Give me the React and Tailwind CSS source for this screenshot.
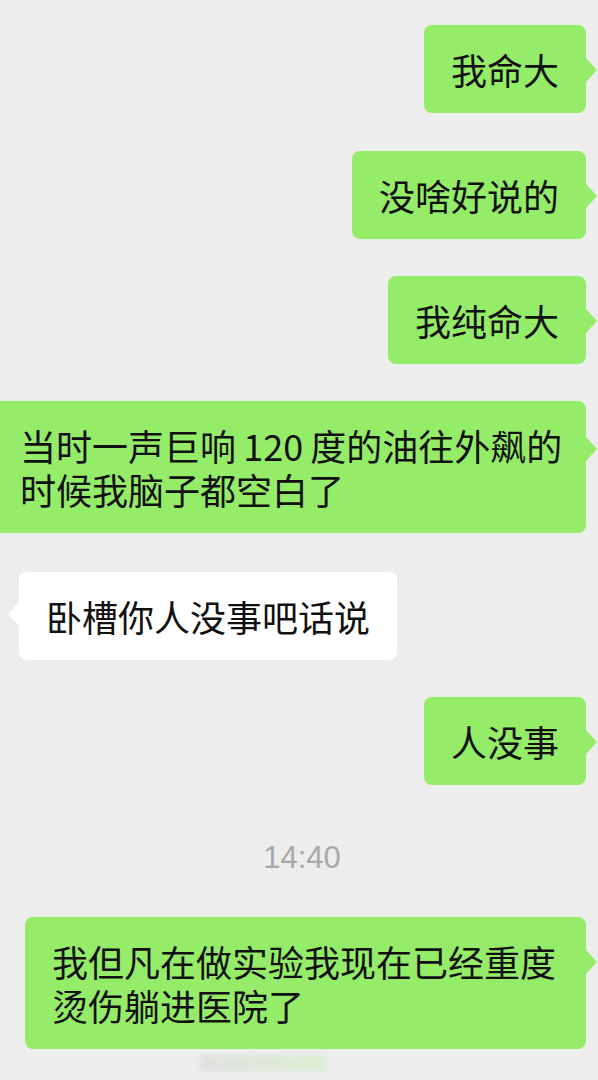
import React from "react";

const font = { fontFamily: '"Noto Sans CJK SC", "Noto Sans", sans-serif' };

function RightBubble({ children, className = "" }) {
  return (
    <div className={`relative self-end mr-[12px] bg-[#95ec69] rounded-[8px] py-[22px] px-[27px] text-[36px] leading-[44px] text-[#111] whitespace-nowrap ${className}`}>
      {children}
      <div className="absolute right-[-11px] top-[33px] w-0 h-0 border-y-[12px] border-y-transparent border-l-[11px] border-l-[#95ec69]" />
    </div>
  );
}

function LeftBubble({ children }) {
  return (
    <div className="relative self-start ml-[19px] bg-white rounded-[8px] py-[22px] px-[27px] text-[36px] leading-[44px] text-[#111] whitespace-nowrap">
      {children}
      <div className="absolute left-[-11px] top-[30px] w-0 h-0 border-y-[12px] border-y-transparent border-r-[11px] border-r-white" />
    </div>
  );
}

export default function App() {
  return (
    <div className="w-[598px] h-[1080px] bg-[#ededed] overflow-hidden flex flex-col pt-[25px]" style={font}>
      <RightBubble>我命大</RightBubble>
      <RightBubble className="mt-[38px]">没啥好说的</RightBubble>
      <RightBubble className="mt-[37px]">我纯命大</RightBubble>
      <div className="relative mt-[37px] w-[586px] bg-[#95ec69] rounded-r-[8px] py-[22px] pl-[20px] pr-[20px] text-[36px] leading-[44px] text-[#111] whitespace-nowrap">
        <div>{"当时一声巨响\u2009120\u2009度的油往外飙的"}</div>
        <div>时候我脑子都空白了</div>
        <div className="absolute right-[-11px] top-[36px] w-0 h-0 border-y-[12px] border-y-transparent border-l-[11px] border-l-[#95ec69]" />
      </div>
      <div className="mt-[39px] flex flex-col">
        <LeftBubble>卧槽你人没事吧话说</LeftBubble>
      </div>
      <RightBubble className="mt-[37px]">人没事</RightBubble>
      <div
        className="mt-[55px] pl-[6px] h-[36px] leading-[36px] text-center text-[31px] text-[#a9a9a9]"
        style={{ fontFamily: '"Liberation Sans", Arial, sans-serif' }}
      >
        14:40
      </div>
      <div className="relative mt-[41px] ml-[25px] w-[561px] bg-[#95ec69] rounded-[8px] py-[22px] px-[27px] text-[36px] leading-[44px] text-[#111] whitespace-nowrap">
        <div>我但凡在做实验我现在已经重度</div>
        <div>烫伤躺进医院了</div>
        <div className="absolute right-[-11px] top-[33px] w-0 h-0 border-y-[12px] border-y-transparent border-l-[11px] border-l-[#95ec69]" />
      </div>
      <div className="mt-[6px] ml-[200px] w-[125px] h-[16px] bg-gradient-to-r from-[#dedede] to-[#d9efcb] blur-[2px] opacity-80" />
    </div>
  );
}
